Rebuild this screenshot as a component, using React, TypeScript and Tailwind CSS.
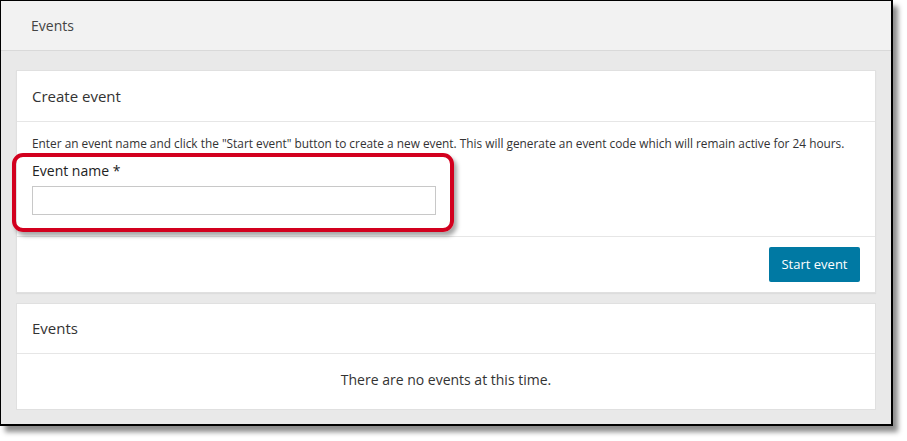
import React from "react";

export default function App() {
  return (
    <div className="w-[907px] h-[441px] bg-white" style={{ fontFamily: '"Open Sans", "Noto Sans", sans-serif' }}>
      <div className="w-[893px] h-[426px] border border-black border-r-2 border-b-2 bg-[#e9e9e9] shadow-[5px_6px_5px_rgba(0,0,0,0.45)] flex flex-col overflow-hidden">
        <div className="h-[50px] shrink-0 bg-[#f2f2f2] border-b border-[#d9d9d9] flex items-center px-[30px] text-[14px] text-[#444]">
          Events
        </div>
        <div className="flex flex-col gap-[10px] px-[15px] pt-[19px]">
          <div className="relative bg-white border border-[#e0e0e0] shadow-[0_1px_1px_rgba(0,0,0,0.05)]">
            <div className="h-[51px] flex items-center px-[15px] text-[15px] text-[#333] border-b border-[#e6e6e6]">
              Create event
            </div>
            <div className="px-[15px] pt-[12px] pb-[21px] border-b border-[#e6e6e6]">
              <p className="text-[11.85px] text-[#333] leading-[18px]">
                Enter an event name and click the "Start event" button to create a new event. This will generate an event code which will remain active for 24 hours.
              </p>
              <label className="block mt-[10px] text-[14px] text-[#222] leading-[18px]">Event name *</label>
              <input type="text" className="block mt-[6px] w-[404px] h-[29px] border border-[#c8c8c8] bg-white outline-none" />
            </div>
            <div className="h-[55px] flex items-center justify-end px-[15px]">
              <button className="w-[91px] h-[35px] bg-[#0079a3] text-white text-[13px] rounded-[2px]">Start event</button>
            </div>
            <div className="absolute left-[-5px] top-[82px] w-[442px] h-[79px] rounded-[11px] border-[4px] border-[#d2001e] shadow-[3px_4px_4px_rgba(0,0,0,0.35)] pointer-events-none" />
          </div>
          <div className="bg-white border border-[#e0e0e0]">
            <div className="h-[50px] flex items-center px-[15px] text-[15px] text-[#333] border-b border-[#e6e6e6]">
              Events
            </div>
            <div className="h-[55px] flex items-center justify-center text-[14px] text-[#333] pb-[4px]">
              There are no events at this time.
            </div>
          </div>
        </div>
      </div>
    </div>
  );
}
